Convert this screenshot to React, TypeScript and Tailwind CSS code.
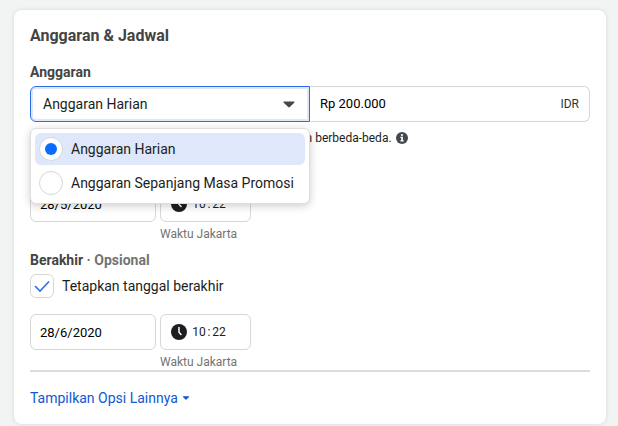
import { useState } from "react";

const box = "h-9 rounded-md border border-[#d6d7da] bg-white";

function ClockIcon() {
  return (
    <svg viewBox="0 0 16 16" className="size-4 shrink-0" aria-hidden="true">
      <circle cx="8" cy="8" r="8" fill="#1c1e21" />
      <path d="M8 3.6v4.6l2 2.2" fill="none" stroke="#fff" strokeWidth="1.5" strokeLinecap="round" strokeLinejoin="round" />
    </svg>
  );
}

function InfoIcon() {
  return (
    <svg viewBox="0 0 12 12" className="size-3 shrink-0" aria-hidden="true">
      <circle cx="6" cy="6" r="6" fill="#444950" />
      <circle cx="6" cy="3" r="1.1" fill="#fff" />
      <path d="M4.4 4.8h2.5v3.5h.8v1.1H4.4V8.3h.8V5.9h-.8z" fill="#fff" />
    </svg>
  );
}

function Caret({ className }: { className: string }) {
  return (
    <svg viewBox="0 0 12 7" className={className} aria-hidden="true">
      <path d="M1.2.5h9.6c.7 0 .9.7.5 1.2L6.8 6.1c-.5.5-1.1.5-1.6 0L.7 1.7C.2 1.2.5.5 1.2.5z" fill="currentColor" />
    </svg>
  );
}

function DateTimeRow({ date, label }: { date: string; label: string }) {
  return (
    <div className="flex gap-1">
      <input
        type="text"
        aria-label={`Tanggal ${label}`}
        defaultValue={date}
        className={`${box} w-[126px] px-[9px] text-[13px] text-black outline-none`}
      />
      <div>
        <div className={`${box} flex w-[91px] items-center px-[10px] text-[12px] text-[#1c1e21]`}>
          <ClockIcon />
          <input type="text" aria-label={`Jam ${label}`} defaultValue="10" className="ml-1 w-4 text-center outline-none" />
          <span className="w-1 text-center">:</span>
          <input type="text" aria-label={`Menit ${label}`} defaultValue="22" className="w-4 text-center outline-none" />
        </div>
        <p className="mt-1 text-[12px] leading-4 text-[#737373]">Waktu Jakarta</p>
      </div>
    </div>
  );
}

const options = ["Anggaran Harian", "Anggaran Sepanjang Masa Promosi"];

export default function App() {
  const [budget, setBudget] = useState(options[0]);
  const [hasEnd, setHasEnd] = useState(true);

  return (
    <main className="min-h-screen bg-[#f2f4f4] pt-[10px] pr-3 pb-[2px] pl-[14px] font-['Roboto','Liberation_Sans',sans-serif] text-[14px] leading-5 text-[#1c1e21]">
      <section className="rounded-lg bg-white px-4 pt-4 pb-4 shadow-[0_0_4px_rgba(0,0,0,0.12)]">
        <h2 className="text-[16px] font-bold text-[#444]">Anggaran &amp; Jadwal</h2>

        <label htmlFor="budget-type" className="mt-4 block font-bold text-[#444]">
          Anggaran
        </label>
        <div className="relative mt-1 flex">
          <div className="relative w-1/2">
            <select
              id="budget-type"
              value={budget}
              onChange={(e) => setBudget(e.target.value)}
              className="h-9 w-full appearance-none rounded-l-md border border-[#2d6be4] bg-white px-3 text-[14px] shadow-[inset_0_0_0_2px_#dfe7fa] outline-none"
            >
              {options.map((o) => (
                <option key={o}>{o}</option>
              ))}
            </select>
            <Caret className="pointer-events-none absolute top-[15px] right-[15px] h-[7px] w-3 text-[#444950]" />
          </div>
          <label className="flex h-9 w-1/2 items-center rounded-r-md border border-l-0 border-[#d6d7da] px-[10px]">
            <input
              type="text"
              aria-label="Jumlah anggaran"
              defaultValue="Rp 200.000"
              className="min-w-0 flex-1 text-[13px] text-black outline-none"
            />
            <span className="text-[12px] text-[#333]">IDR</span>
          </label>

          <div className="absolute top-[42px] left-0 z-10 flex w-1/2 flex-col gap-[2px] rounded-md border border-[#dedede] bg-white p-1 shadow-[0_2px_8px_rgba(0,0,0,0.2)]">
            {options.map((o) => (
              <label
                key={o}
                className="flex h-8 items-center gap-2 rounded-md px-1 has-checked:bg-[#dfe7fa]"
              >
                <input
                  type="radio"
                  name="budget-option"
                  checked={budget === o}
                  onChange={() => setBudget(o)}
                  className="grid size-6 shrink-0 appearance-none place-items-center rounded-full border border-[#d6d7da] bg-white before:size-3 before:rounded-full checked:before:bg-[#0a6cff]"
                />
                {o}
              </label>
            ))}
          </div>
        </div>

        <p className="mt-2 flex h-4 items-center gap-1 text-[12px] leading-4">
          Jumlah aktual yang dibelanjakan setiap hari mungkin berbeda-beda.
          <InfoIcon />
        </p>

        <h3 className="mt-4 mb-1 font-bold text-[#444]">Mulai</h3>
        <DateTimeRow date="28/5/2020" label="mulai" />

        <h3 className="mt-2 font-bold text-[#444]">
          Berakhir <span className="text-[#737373]">· Opsional</span>
        </h3>
        <label className="mt-1 mb-4 flex items-center gap-2">
          <span className="relative size-6">
            <input
              type="checkbox"
              checked={hasEnd}
              onChange={(e) => setHasEnd(e.target.checked)}
              className="peer block size-6 appearance-none rounded-md border border-[#d6d7da] bg-white"
            />
            <svg viewBox="0 0 24 24" className="pointer-events-none absolute inset-0 hidden size-6 peer-checked:block" aria-hidden="true">
              <path d="M5 12l5 5 9-9.500" fill="none" stroke="#2d6bf0" strokeWidth="1.6" />
            </svg>
          </span>
          Tetapkan tanggal berakhir
        </label>
        <DateTimeRow date="28/6/2020" label="berakhir" />

        <hr className="border-t-2 border-[#dadde1]" />
        <button type="button" className="mt-4 flex items-center gap-1 text-[#1158d1]">
          Tampilkan Opsi Lainnya
          <Caret className="h-1 w-2" />
        </button>
      </section>
    </main>
  );
}
